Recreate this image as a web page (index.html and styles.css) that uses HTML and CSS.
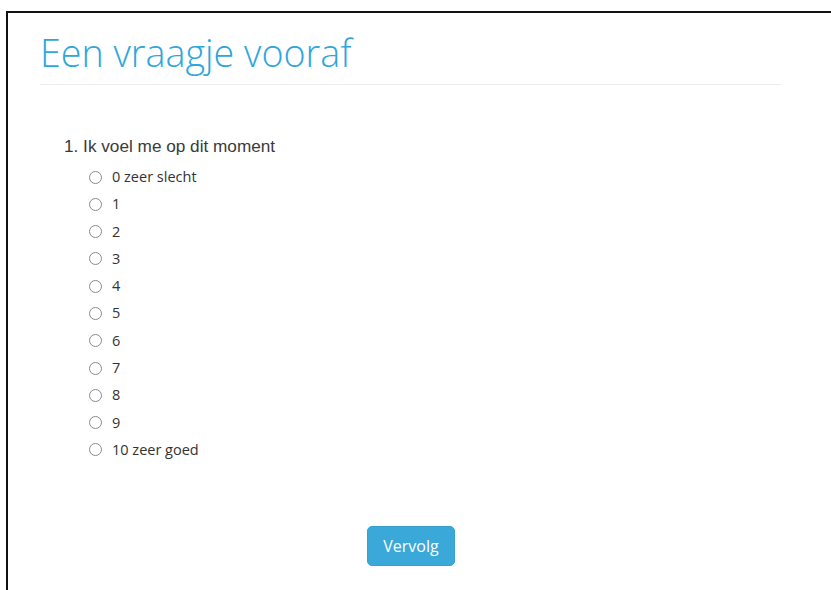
FILE: index.html
```html
<!DOCTYPE html>
<html lang="nl">
<head>
<meta charset="utf-8">
<title>Een vraagje vooraf</title>
<link rel="stylesheet" href="styles.css">
</head>
<body>
<div class="frame">
  <div class="container">
    <h1 class="title">Een vraagje vooraf</h1>
    <form class="survey">
      <div class="question">1. Ik voel me op dit moment</div>
      <ul class="options">
        <li><label><input type="radio" name="q1" value="0"><span>0 zeer slecht</span></label></li>
        <li><label><input type="radio" name="q1" value="1"><span>1</span></label></li>
        <li><label><input type="radio" name="q1" value="2"><span>2</span></label></li>
        <li><label><input type="radio" name="q1" value="3"><span>3</span></label></li>
        <li><label><input type="radio" name="q1" value="4"><span>4</span></label></li>
        <li><label><input type="radio" name="q1" value="5"><span>5</span></label></li>
        <li><label><input type="radio" name="q1" value="6"><span>6</span></label></li>
        <li><label><input type="radio" name="q1" value="7"><span>7</span></label></li>
        <li><label><input type="radio" name="q1" value="8"><span>8</span></label></li>
        <li><label><input type="radio" name="q1" value="9"><span>9</span></label></li>
        <li><label><input type="radio" name="q1" value="10"><span>10 zeer goed</span></label></li>
      </ul>
      <div class="actions">
        <button type="button" class="btn">Vervolg</button>
      </div>
    </form>
  </div>
</div>
</body>
</html>
```

FILE: styles.css
```css
html, body {
  margin: 0;
  padding: 0;
  background: #fff;
}

body {
  font-family: "Open Sans", sans-serif;
  color: #333;
}

.frame {
  margin: 11px 0 0 6px;
  border-top: 2px solid #111;
  border-left: 2px solid #111;
  min-height: 600px;
  box-sizing: border-box;
}

.container {
  padding: 0 49px 0 32px;
}

.title {
  margin: 0;
  padding: 20px 0 11px;
  font-family: "Open Sans", sans-serif;
  font-weight: 300;
  font-size: 37.7px;
  line-height: 40px;
  color: #2ea7da;
  border-bottom: 1px solid #eee;
}

.survey {
  padding-top: 51px;
}

.question {
  padding-left: 24px;
  font-family: "Liberation Sans", Arial, sans-serif;
  font-size: 17.2px;
  line-height: 20px;
  color: #3a3a3a;
}

.options {
  list-style: none;
  margin: 11px 0 0;
  padding: 0 0 0 49px;
}

.options li {
  height: 27.3px;
}

.options label {
  display: flex;
  align-items: center;
  gap: 10px;
  font-size: 14.5px;
  line-height: 20px;
  color: #333;
}

.options input {
  appearance: none;
  -webkit-appearance: none;
  margin: 0;
  width: 13px;
  height: 13px;
  border: 1px solid #8a8a8a;
  border-radius: 50%;
  background: #fff;
  box-sizing: border-box;
}

.actions {
  display: flex;
  justify-content: center;
  padding-top: 59px;
}

.btn {
  font-family: "Open Sans", sans-serif;
  font-size: 16px;
  color: #fff;
  background: #3aa8d8;
  border: 1px solid #36a0ce;
  border-radius: 5px;
  width: 88px;
  height: 40px;
  padding: 0;
}
```
